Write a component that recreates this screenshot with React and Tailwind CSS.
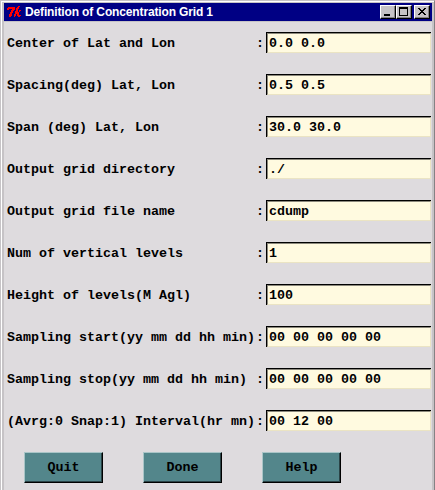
const rows = [
  ['Center of Lat and Lon           :', '0.0 0.0'],
  ['Spacing(deg) Lat, Lon           :', '0.5 0.5'],
  ['Span (deg) Lat, Lon             :', '30.0 30.0'],
  ['Output grid directory           :', './'],
  ['Output grid file name           :', 'cdump'],
  ['Num of vertical levels          :', '1'],
  ['Height of levels(M Agl)         :', '100'],
  ['Sampling start(yy mm dd hh min):', '00 00 00 00 00'],
  ['Sampling stop(yy mm dd hh min) :', '00 00 00 00 00'],
  ['(Avrg:0 Snap:1) Interval(hr mn):', '00 12 00'],
];

function Caption({ className = '', children }) {
  return (
    <div className={`h-[14px] w-4 border border-t-white border-l-white border-r-black border-b-black bg-[#c6c3c6] shadow-[inset_-1px_-1px_0_#848284] ${className}`}>
      <svg viewBox="0 0 14 12" width="14" height="12" shapeRendering="crispEdges" fill="none" stroke="#000" className="block">
        {children}
      </svg>
    </div>
  );
}

function Row({ label, value }) {
  const name = label.replace(/\s*:$/, '');
  return (
    <div className="flex h-[21px] items-center">
      <div className="flex w-[259px] shrink-0 justify-between pt-[2px] pr-[2px] whitespace-pre">
        <span>{name}</span>
        <span>:</span>
      </div>
      <div className="h-[21px] w-[165px] border-t border-l border-black">
        <div className="flex h-5 items-center border border-t-[#8b887c] border-l-[#8b887c] border-r-[#ebe4c3] border-b-[#ebe4c3] bg-[#fffae0] pt-px pl-px whitespace-pre">
          {value}
        </div>
      </div>
    </div>
  );
}

export default function App() {
  return (
    <div className="h-[490px] w-[435px] overflow-hidden border-t border-r border-l border-t-[#c6c3c6] border-l-[#c6c3c6] border-r-[#848284] bg-[#c6c3c6]">
      <div className="h-full border-t border-l border-white pt-px pr-[2px] pl-[2px]">
        <div className="flex h-[18px] items-center bg-[#000084] pr-[2px] pl-[3px]">
          <svg width="15" height="14" viewBox="0 0 15 14" fill="none" stroke="#f00" shapeRendering="crispEdges" className="shrink-0">
            <path d="M1 2.5h7M0 3.5h8M0 4.5h2M5 4.5h3M4 5.5h3M4 6.5h2M3 7.5h3M3 8.5h2M2 9.5h3M2 10.5h3M2 11.5h2" />
            <path d="M11 1.5h2M10 2.5h2M9 3.5h3M9 4.5h2M9 5.5h2M12 5.5h2M8 6.5h3M12 6.5h1M8 7.5h4M8 8.5h4M7 9.5h2M10 9.5h2M7 10.5h2M10 10.5h4M7 11.5h1M11 11.5h2" />
          </svg>
          <span className="ml-[3px] flex-1 font-['Liberation_Sans',Arial,sans-serif] text-[12px] leading-[18px] font-bold tracking-[-0.14px] whitespace-nowrap text-white">
            Definition of Concentration Grid 1
          </span>
          <Caption><path d="M3 9h6" strokeWidth="2" /></Caption>
          <Caption><path d="M2 2h9" strokeWidth="2" /><path d="M2.5 2v7.5h8V2" /></Caption>
          <Caption className="ml-[2px]">
            <path d="M3 2.5h2M9 2.5h2M4 3.5h2M8 3.5h2M5 4.5h4M6 5.5h2M5 6.5h4M4 7.5h2M8 7.5h2M3 8.5h2M9 8.5h2" />
          </Caption>
        </div>
        <main className="mt-px h-[468px] bg-[#dedbde] pt-[10px] pl-[3px] font-['Liberation_Mono','Courier_New',monospace] text-[13.333px] leading-[16px] font-bold text-black">
          <div className="flex flex-col gap-[21px]">
            {rows.map(([label, value]) => <Row key={label} label={label} value={value} />)}
          </div>
          <div className="mt-[21px] flex gap-10 pl-[17px]">
            {['Quit', 'Done', 'Help'].map((name) => (
              <button key={name} className="h-[31px] w-[79px] border border-t-[#a9c5c7] border-l-[#a9c5c7] border-r-black border-b-black bg-[#53868b] shadow-[inset_-1px_-1px_0_#2a4346]">
                {name}
              </button>
            ))}
          </div>
        </main>
      </div>
    </div>
  );
}
